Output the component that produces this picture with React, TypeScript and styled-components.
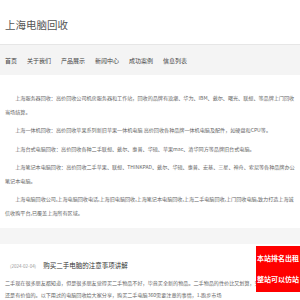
import styled, { createGlobalStyle } from "styled-components";

const GlobalStyle = createGlobalStyle`
  html, body {
    margin: 0;
    padding: 0;
    height: 100%;
    overflow: hidden;
    background: #fff;
    font-family: "Noto Sans CJK SC", "Noto Sans", sans-serif;
  }
`;

const Header = styled.header`
  height: 45px;
  padding: 5px 5px 0;
  box-sizing: border-box;
  display: flex;
  align-items: center;
  border-bottom: 1px solid #e6e6e6;
`;

const Title = styled.h1`
  margin: 0;
  font-size: 10.5px;
  font-weight: normal;
  color: #555;
`;

const Nav = styled.nav`
  height: 30px;
  padding: 0 5px;
  display: flex;
  align-items: center;
  gap: 10px;
  background: #f4f4f4;
`;

const NavLink = styled.a`
  font-size: 6px;
  color: #444;
  text-decoration: none;
`;

const Article = styled.section`
  padding: 16px 5px 4px;
`;

const Para = styled.p`
  margin: 0 0 5px;
  font-size: 5.1px;
  line-height: 13.5px;
  color: #666;
  text-indent: 2em;
`;

const Divider = styled.div`
  height: 16px;
  background: #f5f5f5;
`;

const News = styled.section`
  padding: 14px 5px 0;
`;

const NewsHead = styled.div`
  display: flex;
  align-items: baseline;
  gap: 7px;
  padding-left: 5px;
  line-height: 14px;
`;

const NewsDate = styled.span`
  font-size: 4.5px;
  color: #999;
`;

const NewsTitle = styled.h2`
  margin: 0;
  font-size: 6.5px;
  font-weight: normal;
  color: #333;
`;

const NewsDesc = styled.p`
  margin: 4px 0 0;
  font-size: 5.1px;
  line-height: 12px;
  color: #666;
`;

const Badge = styled.div`
  position: fixed;
  top: 246px;
  right: 0;
  width: 44px;
  padding: 2px 0 2px 1px;
  box-sizing: border-box;
  white-space: nowrap;
  background: #ff0000;
  color: #fff;
  font-size: 7px;
  font-weight: bold;
  line-height: 21px;
`;

const navItems = ["首页", "关于我们", "产品展示", "新闻中心", "成功案例", "信息列表"];

const paragraphs = [
  "上海服务器回收：高价回收公司机房服务器和工作站，回收的品牌有浪潮、华为、IBM、戴尔、曙光、联想、等品牌上门回收当场结算。",
  "上海一体机回收：高价回收苹果系列新旧苹果一体机电脑 高价回收各种品牌一体机电脑及配件，如硬盘和CPU等。",
  "上海台式电脑回收：高价回收各种二手联想、戴尔、惠普、华硕、苹果mac、清华同方等品牌旧台式电脑。",
  "上海笔记本电脑回收：高价回收二手苹果、联想、THINKPAD、戴尔、华硕、惠普、宏基、三星、神舟、索尼等各种品牌办公笔记本电脑。",
  "上海电脑回收公司,上海电脑回收电话,上海旧电脑回收,上海笔记本电脑回收,上海二手电脑回收,上门回收电脑,致力打造上海诚信收购平台,已覆盖上海所有区域。",
];

export default function App() {
  return (
    <>
      <GlobalStyle />
      <Header>
        <Title>上海电脑回收</Title>
      </Header>
      <Nav>
        {navItems.map((item) => (
          <NavLink key={item} href="#">
            {item}
          </NavLink>
        ))}
      </Nav>
      <Article>
        {paragraphs.map((text, i) => (
          <Para key={i}>{text}</Para>
        ))}
      </Article>
      <Divider />
      <News>
        <NewsHead>
          <NewsDate>(2024-02-04)</NewsDate>
          <NewsTitle>购买二手电脑的注意事项讲解</NewsTitle>
        </NewsHead>
        <NewsDesc>
          二手现在很多朋友都知道，但是很多朋友觉得买二手物品不好，毕竟买全新的物品。二手物品的性价比又划算，只要懂得挑选，还是有价值的。以下用过的电脑回收给大家分享，购买二手电脑360需要注意的事情，1.跑步市场
        </NewsDesc>
      </News>
      <Badge>
        本站排名出租
        <br />
        整站可以仿站
      </Badge>
    </>
  );
}
